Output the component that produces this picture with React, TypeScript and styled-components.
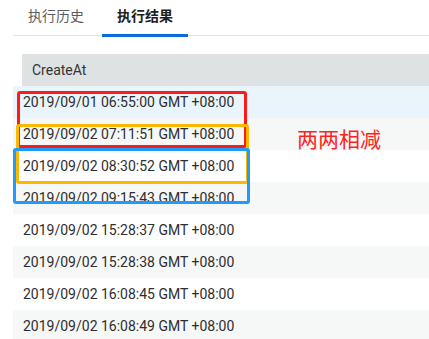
import React from "react";
import styled, { createGlobalStyle } from "styled-components";

const GlobalStyle = createGlobalStyle`
  html, body {
    margin: 0;
    padding: 0;
    background: #ffffff;
    overflow: hidden;
  }
`;

const Page = styled("div")`
  position: relative;
  width: 429px;
  height: 339px;
  padding-left: 13px;
  box-sizing: border-box;
  font-family: Roboto, "Noto Sans CJK SC", sans-serif;
  color: #333333;
  overflow: hidden;
`;

const TabBar = styled("div")`
  display: flex;
  gap: 3px;
  height: 35px;
  border-bottom: 1px solid #e1e3e5;
`;

const Tab = styled("div")<{ $active?: boolean }>`
  position: relative;
  padding: 0 15px;
  font-family: "Noto Sans CJK SC", sans-serif;
  font-size: 14px;
  line-height: 30px;
  color: ${(p) => (p.$active ? "#1f1f1f" : "#5c5c5c")};
  font-weight: ${(p) => (p.$active ? 700 : 400)};

  &::after {
    content: "";
    display: ${(p) => (p.$active ? "block" : "none")};
    position: absolute;
    left: 0;
    right: 0;
    bottom: -2px;
    height: 3px;
    background: #0a6cdc;
  }
`;

const Table = styled("div")`
  margin-top: 18px;
  display: flex;
  flex-direction: column;
`;

const HeaderRow = styled("div")`
  margin-left: 9px;
  height: 32px;
  padding-left: 10px;
  display: flex;
  align-items: center;
  background: #dfe2e3;
  font-size: 14px;
  color: #333333;
`;

const Row = styled("div")<{ $tone: "selected" | "stripe" | "plain" }>`
  height: 32px;
  padding-left: 10px;
  display: flex;
  align-items: center;
  font-size: 14px;
  color: #2e2e2e;
  background: ${(p) =>
    p.$tone === "selected" ? "#e9f5fb" : p.$tone === "stripe" ? "#f6f7f7" : "#ffffff"};
`;

const Mark = styled("div")<{ $color: string }>`
  position: absolute;
  box-sizing: border-box;
  border: 3px solid ${(p) => p.$color};
  border-radius: 3px;
`;

const Note = styled("div")`
  position: absolute;
  left: 297px;
  top: 124px;
  font-family: "Noto Sans CJK SC", sans-serif;
  font-size: 21px;
  line-height: 28px;
  color: #ff1f1f;
`;

const times = [
  "2019/09/01 06:55:00 GMT +08:00",
  "2019/09/02 07:11:51 GMT +08:00",
  "2019/09/02 08:30:52 GMT +08:00",
  "2019/09/02 09:15:43 GMT +08:00",
  "2019/09/02 15:28:37 GMT +08:00",
  "2019/09/02 15:28:38 GMT +08:00",
  "2019/09/02 16:08:45 GMT +08:00",
  "2019/09/02 16:08:49 GMT +08:00",
];

const marks = [
  { color: "#ff1a1a", left: 17, top: 91, width: 230, height: 57 },
  { color: "#ffb800", left: 16, top: 124, width: 233, height: 60 },
  { color: "#1e9bff", left: 13, top: 148, width: 237, height: 56 },
];

export default function App() {
  return (
    <>
      <GlobalStyle />
      <Page>
        <TabBar>
          <Tab>执行历史</Tab>
          <Tab $active>执行结果</Tab>
        </TabBar>
        <Table>
          <HeaderRow>CreateAt</HeaderRow>
          {times.map((t, i) => (
            <Row key={t} $tone={i === 0 ? "selected" : i % 2 === 1 ? "stripe" : "plain"}>
              {t}
            </Row>
          ))}
        </Table>
        {marks.map((m) => (
          <Mark
            key={m.color}
            $color={m.color}
            style={{ left: m.left, top: m.top, width: m.width, height: m.height }}
          />
        ))}
        <Note>两两相减</Note>
      </Page>
    </>
  );
}
